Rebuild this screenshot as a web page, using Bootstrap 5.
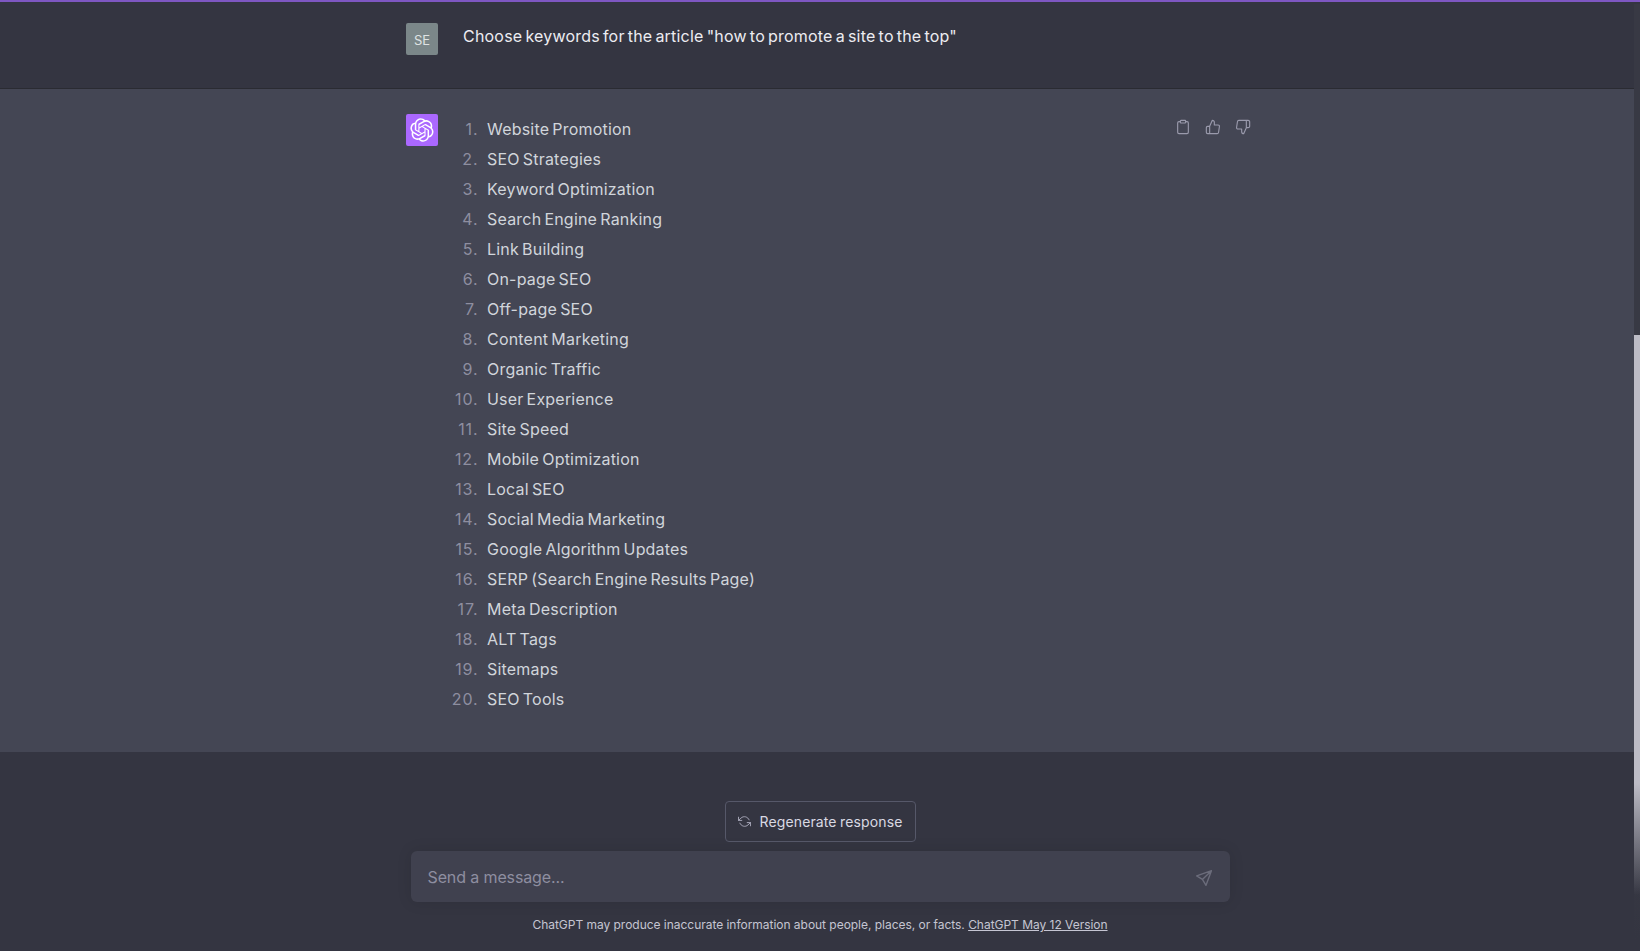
<!doctype html>
<html lang="en">
<head>
<meta charset="utf-8">
<title>Choose keywords</title>
<link rel="stylesheet" href="https://cdn.jsdelivr.net/npm/bootstrap@5.3.0/dist/css/bootstrap.min.css">
<style>
html,body{height:100%;overflow:hidden}
body{background:#343541;color:#d1d5db;font-family:Inter,"Liberation Sans",sans-serif;font-size:16px;line-height:24px}
.page-shell{height:951px;border-top:2px solid #7e57c2}
.msg-user{height:87px;background:#343541;border-bottom:1px solid rgba(32,33,35,.5);padding-top:21px;color:#ececf1}
.msg-bot{height:663px;background:#444654;padding-top:25px}
.msg-inner{width:848px;margin-left:406px;gap:25px}
.tight-text{letter-spacing:.2px;word-spacing:-1.6px}
.user-line{padding-top:1px}
.avatar-box{width:32px;height:32px;flex:none;border-radius:2px;color:#e8ecec;font-size:13px}
.avatar-user{background:#7f8c8d;opacity:.95;padding-top:1px}
.avatar-bot{background:#ab68ff}
.kw-list{list-style:none;counter-reset:kw;width:300px;margin:0;padding:0}
.kw-list li{counter-increment:kw;display:flex;height:30px;line-height:30px;white-space:nowrap}
.kw-list li::before{content:counter(kw) ".";width:32px;margin-left:-16.5px;margin-right:8.5px;text-align:right;color:#8e8ea0;flex:none;letter-spacing:.9px;word-spacing:0}
.act-icons{margin-left:auto;gap:14px;padding-top:5px;padding-right:3px;color:#9a9aac;align-self:flex-start}
.ico{width:16px;height:16px;fill:none;stroke:currentColor;stroke-width:1.7;stroke-linecap:round;stroke-linejoin:round;display:block}
.foot-zone{height:199px;padding-top:49px}
.regen-btn{width:191px;height:41px;font-size:14px;color:#d9d9e3;border:1px solid rgba(86,88,105,1);border-radius:4px;gap:9px;line-height:20px;background:#343541;letter-spacing:.12px;word-spacing:-.6px}
.regen-btn .ico{width:13px;height:13px;stroke-width:1.7;color:#acacbe}
.prompt-box{width:819px;height:51px;margin-top:9px;background:#40414f;border-radius:6px;padding:0 18px 0 17px;color:#8e8ea0;box-shadow:0 0 15px rgba(0,0,0,.1);letter-spacing:-.12px}
.send-ico{color:#6b6c7b;stroke-width:1.4;margin-top:2px}
.legal{font-size:12px;line-height:16px;margin-top:15px;color:#c5c5d2;letter-spacing:-.03px}
.legal a{color:inherit}
.scroll-track{position:absolute;top:2px;right:0;width:6px;height:936px;background:linear-gradient(#383944 0,#383944 88%,rgba(56,57,68,0) 100%)}
.scroll-thumb{position:absolute;top:331px;left:0;width:6px;height:560px;background:linear-gradient(#bdbcc6 0,#bdbcc6 80%,rgba(189,188,198,0) 100%)}
</style>
</head>
<body>
<div class="page-shell d-flex flex-column position-relative">
  <div class="msg-user">
    <div class="msg-inner d-flex">
      <div class="avatar-box avatar-user d-flex align-items-center justify-content-center">SE</div>
      <div class="tight-text user-line">Choose keywords for the article "how to promote a site to the top"</div>
    </div>
  </div>
  <div class="msg-bot">
    <div class="msg-inner d-flex">
      <div class="avatar-box avatar-bot d-flex align-items-center justify-content-center">
        <svg width="24" height="24" viewBox="0 0 41 41" fill="#fff"><path d="M37.5324 16.8707C37.9808 15.5241 38.1363 14.0974 37.9886 12.6859C37.8409 11.2744 37.3934 9.91076 36.676 8.68622C35.6126 6.83404 33.9882 5.3676 32.0373 4.4985C30.0864 3.62941 27.9098 3.40259 25.8215 3.85078C24.8796 2.7893 23.7219 1.94125 22.4257 1.36341C21.1295 0.785575 19.7249 0.491269 18.3058 0.500197C16.1708 0.495044 14.0893 1.16803 12.3614 2.42214C10.6335 3.67624 9.34853 5.44666 8.6917 7.47815C7.30085 7.76286 5.98686 8.3414 4.8377 9.17505C3.68854 10.0087 2.73073 11.0782 2.02839 12.312C0.956464 14.1591 0.498905 16.2988 0.721698 18.4228C0.944492 20.5467 1.83612 22.5449 3.268 24.1293C2.81966 25.4759 2.66413 26.9026 2.81182 28.3141C2.95951 29.7256 3.40701 31.0892 4.12437 32.3138C5.18791 34.1659 6.8123 35.6322 8.76321 36.5013C10.7141 37.3704 12.8907 37.5973 14.9789 37.1492C15.9208 38.2107 17.0786 39.0587 18.3747 39.6366C19.6709 40.2144 21.0755 40.5087 22.4946 40.4998C24.6307 40.5054 26.7133 39.8321 28.4418 38.5772C30.1704 37.3223 31.4556 35.5506 32.1119 33.5179C33.5027 33.2332 34.8167 32.6547 35.9659 31.821C37.115 30.9874 38.0728 29.9178 38.7752 28.684C39.8458 26.8371 40.3023 24.6979 40.0789 22.5748C39.8556 20.4517 38.9639 18.4544 37.5324 16.8707ZM22.4978 37.8849C20.7443 37.8874 19.0459 37.2733 17.6994 36.1501C17.7601 36.117 17.8666 36.0586 17.936 36.0161L25.9004 31.4156C26.1003 31.3019 26.2663 31.137 26.3813 30.9378C26.4964 30.7386 26.5563 30.5124 26.5549 30.2825V19.0542L29.9213 20.998C29.9389 21.0068 29.9541 21.0198 29.9656 21.0359C29.977 21.052 29.9842 21.0707 29.9867 21.0902V30.3889C29.9842 32.375 29.1946 34.2791 27.7909 35.6841C26.3872 37.0892 24.4838 37.8806 22.4978 37.8849ZM6.39227 31.0064C5.51397 29.4888 5.19742 27.7107 5.49804 25.9832C5.55718 26.0187 5.66048 26.0818 5.73461 26.1244L13.699 30.7248C13.8975 30.8408 14.1233 30.902 14.3532 30.902C14.583 30.902 14.8088 30.8408 15.0073 30.7248L24.731 25.1103V28.9979C24.7321 29.0177 24.7283 29.0376 24.7199 29.0556C24.7115 29.0736 24.6988 29.0893 24.6829 29.1012L16.6317 33.7497C14.9096 34.7416 12.8643 35.0097 10.9447 34.4954C9.02506 33.9811 7.38785 32.7263 6.39227 31.0064ZM4.29707 13.6194C5.17156 12.0998 6.55279 10.9364 8.19885 10.3327C8.19885 10.4013 8.19491 10.5228 8.19491 10.6071V19.808C8.19351 20.0378 8.25334 20.2638 8.36823 20.4629C8.48312 20.6619 8.64893 20.8267 8.84863 20.9404L18.5723 26.5542L15.206 28.4979C15.1894 28.5089 15.1703 28.5155 15.1505 28.5173C15.1307 28.5191 15.1107 28.516 15.0924 28.5082L7.04046 23.8557C5.32135 22.8601 4.06716 21.2235 3.55289 19.3046C3.03862 17.3858 3.30624 15.3413 4.29707 13.6194ZM31.955 20.0556L22.2312 14.4411L25.5976 12.4981C25.6142 12.4872 25.6333 12.4805 25.6531 12.4787C25.6729 12.4769 25.6928 12.4801 25.7111 12.4879L33.7631 17.1364C34.9967 17.849 36.0017 18.8982 36.6606 20.1613C37.3194 21.4244 37.6047 22.849 37.4832 24.2684C37.3617 25.6878 36.8382 27.0432 35.9743 28.1759C35.1103 29.3086 33.9415 30.1717 32.6047 30.6641C32.6047 30.5947 32.6047 30.4733 32.6047 30.3889V21.188C32.6066 20.9586 32.5474 20.7328 32.4332 20.5338C32.319 20.3348 32.154 20.1698 31.955 20.0556ZM35.3055 15.0128C35.2464 14.9765 35.1431 14.9142 35.069 14.8717L27.1045 10.2712C26.906 10.1554 26.6803 10.0943 26.4504 10.0943C26.2206 10.0943 25.9948 10.1554 25.7963 10.2712L16.0726 15.8858V11.9982C16.0715 11.9783 16.0753 11.9585 16.0837 11.9405C16.0921 11.9225 16.1048 11.9068 16.1207 11.8949L24.1719 7.25025C25.4053 6.53903 26.8158 6.19376 28.2383 6.25482C29.6608 6.31589 31.0364 6.78077 32.2044 7.59508C33.3723 8.40939 34.2842 9.53945 34.8334 10.8531C35.3826 12.1667 35.5464 13.6095 35.3055 15.0128ZM14.2424 21.9419L10.8752 19.9981C10.8576 19.9893 10.8423 19.9763 10.8309 19.9602C10.8195 19.9441 10.8122 19.9254 10.8098 19.9058V10.6071C10.8107 9.18295 11.2173 7.78848 11.9819 6.58696C12.7466 5.38544 13.8377 4.42659 15.1275 3.82264C16.4173 3.21869 17.8524 2.99464 19.2649 3.1767C20.6775 3.35876 22.0089 3.93941 23.1034 4.85067C23.0427 4.88379 22.937 4.94215 22.8668 4.98473L14.9024 9.58517C14.7025 9.69878 14.5366 9.86356 14.4215 10.0626C14.3065 10.2616 14.2466 10.4877 14.2479 10.7175L14.2424 21.9419ZM16.071 17.9991L20.4018 15.4978L24.7325 17.9975V22.9985L20.4018 25.4983L16.071 22.9985V17.9991Z"/></svg>
      </div>
      <ol class="kw-list tight-text">
        <li>Website Promotion</li>
        <li>SEO Strategies</li>
        <li>Keyword Optimization</li>
        <li>Search Engine Ranking</li>
        <li>Link Building</li>
        <li>On-page SEO</li>
        <li>Off-page SEO</li>
        <li>Content Marketing</li>
        <li>Organic Traffic</li>
        <li>User Experience</li>
        <li>Site Speed</li>
        <li>Mobile Optimization</li>
        <li>Local SEO</li>
        <li>Social Media Marketing</li>
        <li>Google Algorithm Updates</li>
        <li>SERP (Search Engine Results Page)</li>
        <li>Meta Description</li>
        <li>ALT Tags</li>
        <li>Sitemaps</li>
        <li>SEO Tools</li>
      </ol>
      <div class="act-icons d-flex">
        <svg class="ico" viewBox="0 0 24 24"><path d="M16 4h2a2 2 0 0 1 2 2v14a2 2 0 0 1-2 2H6a2 2 0 0 1-2-2V6a2 2 0 0 1 2-2h2"/><rect x="8" y="2" width="8" height="4" rx="1" ry="1"/></svg>
        <svg class="ico" viewBox="0 0 24 24"><path d="M14 9V5a3 3 0 0 0-3-3l-4 9v11h11.28a2 2 0 0 0 2-1.7l1.38-9a2 2 0 0 0-2-2.3zM7 22H4a2 2 0 0 1-2-2v-7a2 2 0 0 1 2-2h3"/></svg>
        <svg class="ico" viewBox="0 0 24 24"><path d="M10 15v4a3 3 0 0 0 3 3l4-9V2H5.72a2 2 0 0 0-2 1.7l-1.38 9a2 2 0 0 0 2 2.3zm7-13h2.67A2.31 2.31 0 0 1 22 4v7a2.31 2.31 0 0 1-2.33 2H17"/></svg>
      </div>
    </div>
  </div>
  <div class="foot-zone d-flex flex-column align-items-center">
    <div class="regen-btn d-flex align-items-center justify-content-center">
      <svg class="ico" viewBox="0 0 24 24"><polyline points="1 4 1 10 7 10"/><polyline points="23 20 23 14 17 14"/><path d="M20.49 9A9 9 0 0 0 5.64 5.64L1 10m22 4l-4.64 4.36A9 9 0 0 1 3.51 15"/></svg>
      <span>Regenerate response</span>
    </div>
    <div class="prompt-box d-flex align-items-center justify-content-between">
      <span>Send a message...</span>
      <svg class="ico send-ico" viewBox="0 0 16 16"><path d="M15.5 .7 .7 5.9 6.4 9.4 10 15.3ZM6.4 9.4 15.5 .7"/></svg>
    </div>
    <div class="legal">ChatGPT may produce inaccurate information about people, places, or facts. <a href="#">ChatGPT May 12 Version</a></div>
  </div>
  <div class="scroll-track"><div class="scroll-thumb"></div></div>
</div>
</body>
</html>
